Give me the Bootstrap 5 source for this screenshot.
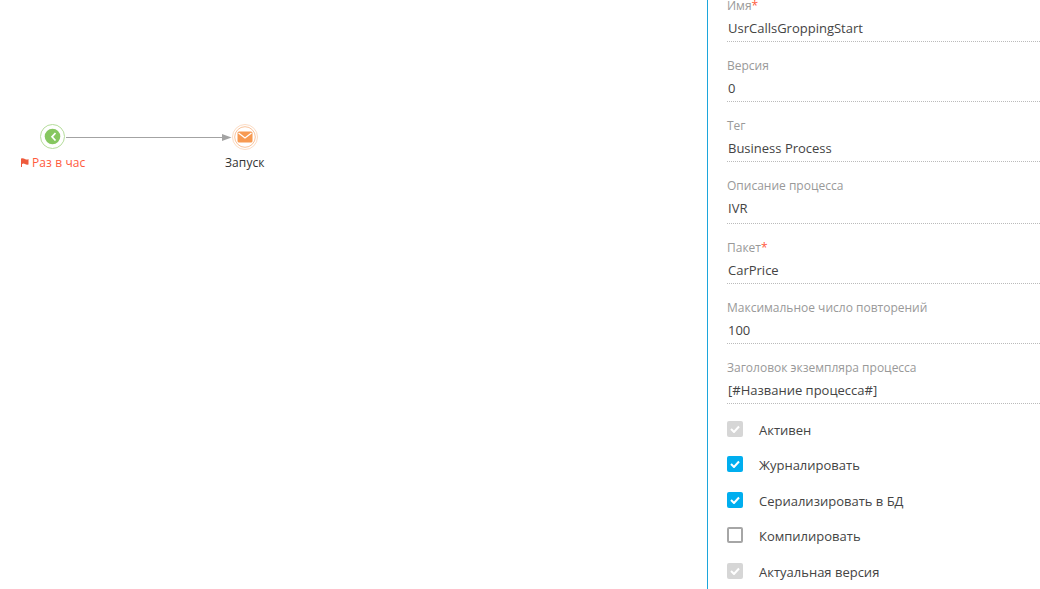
<!doctype html>
<html lang="ru"><head><meta charset="utf-8"><title>Процесс</title>
<link href="https://cdn.jsdelivr.net/npm/bootstrap@5.3.0/dist/css/bootstrap.min.css" rel="stylesheet">
<style>
html,body{height:589px;overflow:hidden;background:#fff;font-family:"Open Sans",sans-serif}
.shell{height:589px}
.canvas-area{width:707px;position:relative}
.panel-side{width:333px;border-left:1px solid #1ca6dc;padding-left:19px;overflow:hidden}
.panel-in{margin-top:-3px}
.fld{height:60px}
.fld.tall{height:62px}
.fld.tail{height:53.7px}
.fld-label{font-size:12px;line-height:17px;color:#999;height:17px;display:block;margin:0}
.fld-label i{font-style:normal;color:#ff5a3c}
.fld-value{font-size:13px;line-height:18px;color:#444;padding:5px 0 4px 1px;border-bottom:1px dotted #bbb;height:28px}
.tall .fld-value{height:30px}
.chk-row{height:35.5px;font-size:13px;color:#444}
.box{width:16px;height:16px;border-radius:2px;flex:none;margin-right:16px;margin-bottom:3.4px;display:flex;align-items:center;justify-content:center}
.box.on{background:#00aeef}
.box.dis{background:#d6d6d6}
.box.off{border:2px solid #a6a6a6;background:#fff}
.node{position:absolute}
.node-label{position:absolute;font-size:12px;line-height:16px;white-space:nowrap;letter-spacing:.1px}
.lbl-red{color:#ff5a3c;left:32px;top:155px}
.lbl-dark{color:#333;left:225px;top:155px}
.flag{position:absolute;left:20px;top:157px}
</style></head><body>
<div class="d-flex shell">
 <div class="canvas-area">
  <svg class="node" style="left:0;top:0" width="300" height="180">
   <circle cx="52.500" cy="136.500" r="12" fill="#fff" stroke="#b5dd9b" stroke-width="1"/>
   <circle cx="52.500" cy="136.500" r="7.800" fill="#86c760"/>
   <path d="M55.500 133 L52 136.800 L55.500 140.500" fill="none" stroke="#fff" stroke-width="1.700"/>
   <line x1="66" y1="137.500" x2="223" y2="137.500" stroke="#a3a3a3" stroke-width="1"/>
   <path d="M222 134 L231.500 137.500 L222 141Z" fill="#a3a3a3"/>
   <circle cx="245" cy="137" r="12.500" fill="#fff" stroke="#fcdcc4" stroke-width="1"/>
   <circle cx="245" cy="137" r="10.300" fill="#fff" stroke="#fac49c" stroke-width="1"/>
   <rect x="237.500" y="131.500" width="15" height="11" rx="1.500" fill="#f79a52"/>
   <path d="M238.500 133 L245 138 L251.500 133" fill="none" stroke="#fff" stroke-width="1.300"/>
  </svg>
  <svg class="flag" width="10" height="12"><path d="M1 1.500Q3 1 5 2T8.500 2V7.500Q6.500 8 5 7T2 7V10H1Z" fill="#ee5a3c"/></svg>
  <span class="node-label lbl-red">Раз в час</span>
  <span class="node-label lbl-dark">Запуск</span>
 </div>
 <div class="panel-side">
  <div class="panel-in">
   <div class="fld"><label class="fld-label">Имя<i>*</i></label><div class="fld-value">UsrCallsGroppingStart</div></div>
   <div class="fld"><label class="fld-label">Версия</label><div class="fld-value">0</div></div>
   <div class="fld"><label class="fld-label">Тег</label><div class="fld-value">Business Process</div></div>
   <div class="fld tall"><label class="fld-label">Описание процесса</label><div class="fld-value">IVR</div></div>
   <div class="fld"><label class="fld-label">Пакет<i>*</i></label><div class="fld-value">CarPrice</div></div>
   <div class="fld"><label class="fld-label">Максимальное число повторений</label><div class="fld-value">100</div></div>
   <div class="fld tail"><label class="fld-label">Заголовок экземпляра процесса</label><div class="fld-value">[#Название процесса#]</div></div>
   <div class="chk-row d-flex align-items-center"><span class="box dis"><svg width="10" height="8"><path d="M1 4L4 7L9 1.500" fill="none" stroke="#fff" stroke-width="2"/></svg></span>Активен</div>
   <div class="chk-row d-flex align-items-center"><span class="box on"><svg width="10" height="8"><path d="M1 4L4 7L9 1.500" fill="none" stroke="#fff" stroke-width="2"/></svg></span>Журналировать</div>
   <div class="chk-row d-flex align-items-center"><span class="box on"><svg width="10" height="8"><path d="M1 4L4 7L9 1.500" fill="none" stroke="#fff" stroke-width="2"/></svg></span>Сериализировать в БД</div>
   <div class="chk-row d-flex align-items-center"><span class="box off"></span>Компилировать</div>
   <div class="chk-row d-flex align-items-center"><span class="box dis"><svg width="10" height="8"><path d="M1 4L4 7L9 1.500" fill="none" stroke="#fff" stroke-width="2"/></svg></span>Актуальная версия</div>
  </div>
 </div>
</div>
</body></html>
